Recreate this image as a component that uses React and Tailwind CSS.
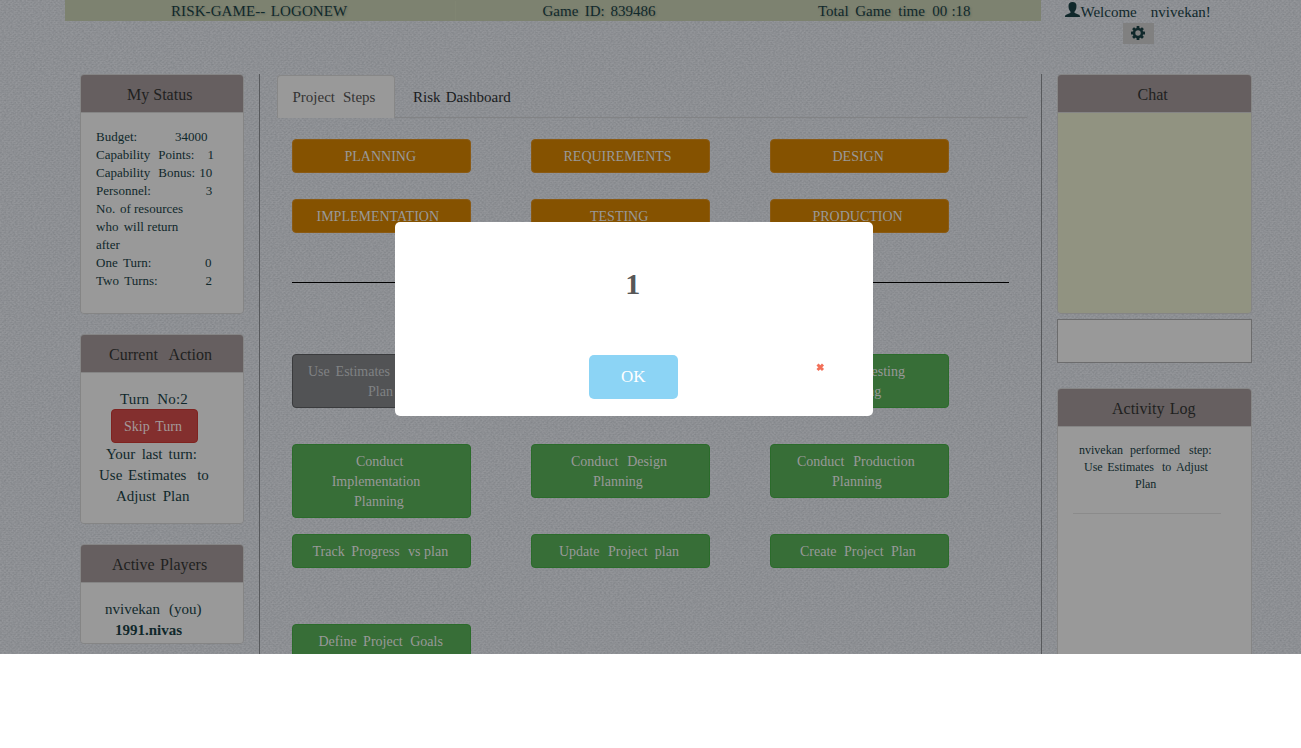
import React from "react";

/* One line of text; `gaps` holds the extra space after each word, `x` the indent. */
function Line({ text, gaps = [], x = 0, className = "" }) {
  const words = text.split(" ");
  return (
    <div className={"whitespace-pre text-left " + className} style={{ paddingLeft: x }}>
      {words.map((w, i) => (
        <span key={i} style={{ wordSpacing: gaps[i] || 0 }}>
          {i < words.length - 1 ? w + " " : w}
        </span>
      ))}
    </div>
  );
}

function Panel({ title, x, gaps, className = "", body = "bg-[#999999]", children }) {
  return (
    <section className={"flex shrink-0 flex-col overflow-hidden rounded border border-[#858585] " + className}>
      <h3 className="h-[38px] shrink-0 border-b border-[#858585] bg-[#665f60] pt-[10px] text-base leading-[20px] text-[#1f1f1f]">
        <Line text={title} x={x} gaps={gaps} />
      </h3>
      <div className={"flex-1 " + body}>{children}</div>
    </section>
  );
}

const tones = {
  orange: "border-[#8a5a14] bg-[#855200]",
  green: "border-[#2b6b2b] bg-[#376e37]",
  gray: "border-[#3a3b3d] bg-[#525355]",
};

function Step({ tone, lines }) {
  return (
    <button
      className={
        "w-[179px] self-start rounded border pb-[5px] pt-[7px] text-sm leading-[20px] " +
        tones[tone] +
        (tone === "gray" ? " text-[#808284]" : " text-[#999999]")
      }
    >
      {lines.map((l, i) => (
        <Line key={i} text={l[0]} x={l[1]} gaps={l[2]} />
      ))}
    </button>
  );
}

const phases = [
  [["PLANNING", 51.5]],
  [["REQUIREMENTS", 31.5]],
  [["DESIGN", 61.5]],
  [["IMPLEMENTATION", 23.5]],
  [["TESTING", 58]],
  [["PRODUCTION", 41.5]],
];

const steps = [
  ["gray", [["Use Estimates", 15, [2.3]], ["Plan", 75]]],
  ["green", []],
  ["green", [["Conduct Testing", 37, [5]], ["Planning", 60.5]]],
  ["green", [["Conduct", 63], ["Implementation", 38.7], ["Planning", 61]]],
  ["green", [["Conduct Design", 39, [5.3]], ["Planning", 61]]],
  ["green", [["Conduct Production", 26, [5.3]], ["Planning", 61]]],
  ["green", [["Track Progress vs plan", 19.5, [3.2, 5, 0]]]],
  ["green", [["Update Project plan", 27, [5, 3.7]]]],
  ["green", [["Create Project Plan", 29, [4, 3.7]]]],
  ["green", [["Define Project Goals", 25.5, [3, 4]]]],
];

const status = [
  ["Budget: 34000", [34.5]],
  ["Capability Points: 1", [4.8, 10]],
  ["Capability Bonus: 10", [4.8, 1]],
  ["Personnel: 3", [51.7]],
  ["No. of resources", [1.5, 0]],
  ["who will return", [2, 0.2]],
  ["after"],
  ["One Turn: 0", [2, 50.4]],
  ["Two Turns: 2", [2, 44.7]],
];

/* Linen background: a soft, mostly horizontal grain with a fine weave over it. */
function Linen() {
  return (
    <svg className="absolute inset-0 h-full w-full" aria-hidden="true">
      <filter id="weave" x="0" y="0" width="100%" height="100%" colorInterpolationFilters="sRGB">
        <feTurbulence type="fractalNoise" baseFrequency="0.45 0.7" numOctaves="2" seed="4" />
        <feColorMatrix values="0 0 0 0 0.38  0 0 0 0 0.4  0 0 0 0 0.42  0.5 0 0 0 -0.16" />
      </filter>
      <pattern id="threads" width="4" height="4" patternUnits="userSpaceOnUse">
        <path d="M0 0h2v1H0zM2 2h2v1H2z" fill="#84878b" opacity="0.4" />
        <path d="M2 0h1v2H2zM0 2h1v2H0z" fill="#9a9da1" opacity="0.3" />
      </pattern>
      <rect width="100%" height="100%" fill="url(#threads)" />
      <rect width="100%" height="100%" filter="url(#weave)" />
    </svg>
  );
}

export default function App() {
  return (
    <div className="relative h-[748px] w-[1301px] overflow-hidden bg-white font-['Liberation_Serif',serif]">
      <div className="relative h-[654px] overflow-hidden bg-[#929498] text-[#10282b]">
        <Linen />
        <div className="relative flex h-full flex-col">
          <header className="flex h-[74px] shrink-0 pl-[65px] text-[15px] leading-[21px]">
            <div className="flex h-[21px] w-[976px] shrink-0 bg-[#7d8270] pt-[1px] [text-shadow:1px_1px_2px_rgba(60,70,60,0.35)]">
              <div className="w-[391px] border-r border-[#808572]">
                <Line text="RISK-GAME-- LOGONEW" x={106} gaps={[1.5]} className="tracking-[0.1px]" />
              </div>
              <div className="w-[325px]">
                <Line text="Game ID: 839486" x={86.5} gaps={[2.6, 2.1]} />
              </div>
              <div>
                <Line text="Total Game time 00 :18" x={37} gaps={[2.8, 3.5, 3.5, 0.5]} />
              </div>
            </div>
            <div className="flex w-[195px] flex-col pl-[24px]">
              <div className="flex h-[23px]">
                <svg className="mt-[2px] h-[15px] w-[15px]" viewBox="0 0 15 15" fill="#10282b">
                  <path d="M7.500 0C5 0 3.500 1.400 3.500 3.900c0 2.400.7 4.300 1.900 5.500.3.900 0 1.600-.8 1.900L1.200 12.700C.3 13.100 0 13.700 0 15h15c0-1.300-.3-1.900-1.200-2.300l-3.400-1.400c-.8-.3-1.100-1-.8-1.900 1.200-1.200 1.900-3.100 1.900-5.500C11.500 1.400 10 0 7.500 0z" />
                </svg>
                <Line text="Welcome nvivekan!" x={0.5} gaps={[10.3]} className="pt-[2px]" />
              </div>
              <button className="ml-[58px] flex h-[21px] w-[31px] items-start bg-[#808080] pl-[8px] pt-[3px]">
                <svg className="h-[14px] w-[14px]" viewBox="0 0 14 14">
                  <g fill="#10282b">
                    <rect x="5.600" y="0" width="2.800" height="14" rx=".5" />
                    <rect x="5.600" y="0" width="2.800" height="14" rx=".5" transform="rotate(45 7 7)" />
                    <rect x="5.600" y="0" width="2.800" height="14" rx=".5" transform="rotate(90 7 7)" />
                    <rect x="5.600" y="0" width="2.800" height="14" rx=".5" transform="rotate(135 7 7)" />
                    <circle cx="7" cy="7" r="5.200" />
                  </g>
                  <circle cx="7" cy="7" r="2.700" fill="#808080" />
                </svg>
              </button>
            </div>
          </header>

          <div className="flex min-h-0 flex-1">
            <aside className="flex w-[259px] shrink-0 flex-col gap-5 pl-[80px]">
              <Panel title="My Status" x={46} className="h-[240px] w-[164px]">
                <div className="pl-[15px] pt-[15px] text-[13px] leading-[18px]">
                  {status.map(([t, g]) => (
                    <Line key={t} text={t} gaps={g} />
                  ))}
                </div>
              </Panel>
              <Panel title="Current Action" x={28} gaps={[6.5]} className="h-[190px] w-[164px]">
                <div className="pt-[16px] text-[15px] leading-[21px]">
                  <Line text="Turn No:2" x={39} gaps={[4.2]} className="tracking-[0.15px]" />
                  <button className="-mt-px mb-px ml-[30px] block h-[34px] w-[87px] rounded border border-[#7f2320] bg-[#832f2e] pt-px text-sm leading-[20px] text-[#a49a9a]">
                    <Line text="Skip Turn" x={12} gaps={[2]} />
                  </button>
                  <Line text="Your last turn:" x={25} gaps={[2.6, 2.3]} />
                  <Line text="Use Estimates to" x={18} gaps={[2, 7]} />
                  <Line text="Adjust Plan" x={35} gaps={[3]} />
                </div>
              </Panel>
              <Panel title="Active Players" x={31} gaps={[1.4]} className="h-[100px] w-[164px]">
                <div className="pt-[16px] text-[15px] leading-[21px]">
                  <Line text="nvivekan (you)" x={24} gaps={[5.3]} />
                  <Line text="1991.nivas" x={34} className="font-bold" />
                </div>
              </Panel>
            </aside>

            <main className="flex w-[783px] shrink-0 flex-col border-x border-[#57595c]">
              <nav className="ml-[17px] mt-px flex h-[43px] w-[750px] border-b border-[#828385] text-[15px] leading-[21px]">
                <div className="mb-[-1px] h-[43px] w-[118px] rounded-t border border-b-0 border-[#878787] bg-[#999999] pt-[11px] text-[#333333]">
                  <Line text="Project Steps" x={14.5} gaps={[4.2]} />
                </div>
                <div className="pt-[12px] text-[#1a1c1e]">
                  <Line text="Risk Dashboard" x={18} gaps={[1.5]} />
                </div>
              </nav>
              <div className="ml-[32px] mt-[21px] grid w-[657px] grid-cols-[179px_179px_179px] gap-x-[60px] gap-y-[26px]">
                {phases.map((l, i) => (
                  <Step key={i} tone="orange" lines={l} />
                ))}
              </div>
              <hr className="ml-[32px] mt-[49px] w-[717px] shrink-0 border-t border-black" />
              <div className="ml-[32px] mt-[71px] grid grid-cols-[179px_179px_179px] grid-rows-[90px_90px_90px_90px] gap-x-[60px]">
                {steps.map(([tone, l], i) => (
                  <Step key={i} tone={tone} lines={l} />
                ))}
              </div>
            </main>

            <aside className="flex w-[210px] shrink-0 flex-col pl-[15px]">
              <Panel title="Chat" x={79.5} className="h-[240px] w-[195px]" body="bg-[#919381]" />
              <input className="mt-[5px] h-[44px] w-[195px] shrink-0 border border-[#6c6c6d] bg-[#999999]" />
              <Panel title="Activity Log" x={54} gaps={[1.4]} className="mt-[25px] h-[300px] w-[195px]">
                <div className="ml-[15px] w-[148px] border-b border-[#8b8b8b] pb-[20px] pt-[15px] text-xs leading-[17px]">
                  <Line text="nvivekan performed step:" x={6} gaps={[4, 6]} />
                  <Line text="Use Estimates to Adjust" x={11} gaps={[1.6, 5, 1.6]} />
                  <Line text="Plan" x={62} />
                </div>
              </Panel>
            </aside>
          </div>
        </div>
      </div>

      <div className="absolute left-[395px] top-[222px] flex h-[194px] w-[477.500px] flex-col items-center rounded-[5px] bg-white">
        <h2 className="mt-[42px] pr-[2px] text-[30px] font-bold leading-[40px] text-[#575757]">1</h2>
        <button className="-ml-px mt-[51px] h-[44px] w-[89px] rounded-[5px] bg-[#8cd4f5] text-[17px] leading-[42px] text-white">
          OK
        </button>
        <svg className="absolute left-[421px] top-[141px] h-[9px] w-[9px]" viewBox="0 0 9 9">
          <path d="M1.500 1.500L7 7M7 1.500L1.500 7" stroke="#f27059" strokeWidth="2.900" />
        </svg>
      </div>
    </div>
  );
}
